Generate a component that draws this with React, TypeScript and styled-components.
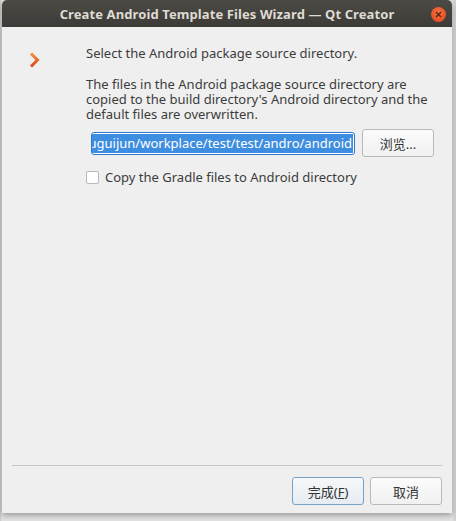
import styled, {createGlobalStyle} from 'styled-components'

const Global = createGlobalStyle`
  html, body {
    margin: 0;
    padding: 0;
    background: #d6d6d6;
  }
  body {
    width: 456px;
    height: 521px;
    overflow: hidden;
    font-family: "Noto Sans", "Noto Sans CJK SC", sans-serif;
  }
`

const Screen = styled.div`
  display: flex;
  width: 456px;
  height: 521px;
  padding-left: 2px;
  box-sizing: border-box;
  background: linear-gradient(to right, #c9c9c9 0, #e2e2e2 2px, #e2e2e2 452px, #cfcfcf 100%);
`

const Window = styled.div`
  display: flex;
  flex-direction: column;
  width: 450px;
  height: 513px;
  border-radius: 5px 5px 0 0;
  overflow: hidden;
  box-shadow: 0 2px 6px rgba(0, 0, 0, 0.35);
`

const TitleBar = styled.div`
  position: relative;
  display: flex;
  align-items: center;
  justify-content: center;
  height: 27px;
  flex: none;
  background: linear-gradient(#4b4a45, #3c3b37);
  color: #dfdbd2;
  font-weight: bold;
  font-size: 13px;
  letter-spacing: 0.1px;
`

const CloseButton = styled.div`
  position: absolute;
  right: 6px;
  top: 7px;
  width: 15px;
  height: 15px;
  border-radius: 50%;
  background: radial-gradient(circle at 50% 35%, #f4703f, #e0461b);
  display: flex;
  align-items: center;
  justify-content: center;
`

const Body = styled.div`
  flex: 1;
  display: flex;
  flex-direction: column;
  background: #efefef;
  color: #3c3c3c;
  font-size: 13px;
`

const Content = styled.div`
  display: flex;
  padding: 19px 0 0 27px;
`

const IconColumn = styled.div`
  width: 57px;
  padding-top: 6px;
  flex: none;
`

const Main = styled.div`
  display: flex;
  flex-direction: column;
  flex: 1;
`

const Line = styled.p<{$gap?: number}>`
  margin: 0;
  margin-top: ${p => p.$gap ?? 0}px;
  line-height: 15px;
`

const PathRow = styled.div`
  display: flex;
  align-items: center;
  gap: 7px;
  margin: 7px 0 0 5px;
`

const PathField = styled.div`
  width: 264px;
  height: 23px;
  box-sizing: border-box;
  border: 1px solid #2d78cc;
  border-radius: 3px;
  background: #fff;
  display: flex;
  justify-content: flex-end;
  align-items: center;
  overflow: hidden;
  white-space: nowrap;
  padding: 1px;
`

const Selection = styled.span`
  background: #3d8ee0;
  color: #fff;
  line-height: 19px;
  padding-right: 1px;
`

const Button = styled.button<{$default?: boolean}>`
  width: 72px;
  height: 28px;
  border: 1px solid ${p => (p.$default ? '#7ba2c6' : '#b9b9b9')};
  border-radius: 3px;
  background: ${p => (p.$default ? 'linear-gradient(#f6f8fa, #e6ecf1)' : 'linear-gradient(#fbfbfb, #f1f1f1)')};
  color: #333;
  font-family: "Noto Sans", "Noto Sans CJK SC", sans-serif;
  font-size: 13px;
  padding: 0;
`

const CheckRow = styled.label`
  display: flex;
  align-items: center;
  gap: 6px;
  margin-top: 12px;
  line-height: 17px;
`

const CheckBox = styled.span`
  width: 11px;
  height: 11px;
  border: 1px solid #b8b8b8;
  border-radius: 2px;
  background: #fff;
`

const Spacer = styled.div`
  flex: 1;
`

const Separator = styled.div`
  height: 1px;
  margin: 0 10px 0 10px;
  background: #c6c6c6;
`

const ButtonRow = styled.div`
  display: flex;
  justify-content: flex-end;
  gap: 6px;
  padding: 11px 10px 8px 0;
`

const Chevron = () => (
  <svg width="11" height="16" viewBox="0 0 11 16">
    <defs>
      <linearGradient id="chev" x1="0" y1="0" x2="0" y2="1">
        <stop offset="0" stopColor="#f39040" />
        <stop offset="1" stopColor="#d9461c" />
      </linearGradient>
    </defs>
    <path d="M2 1.5 L8.5 8 L2 14.5" fill="none" stroke="url(#chev)" strokeWidth="3" strokeLinejoin="miter" />
  </svg>
)

export default function App() {
  return (
    <Screen>
      <Global />
      <Window>
        <TitleBar>
          Create Android Template Files Wizard — Qt Creator
          <CloseButton>
            <svg width="7" height="7" viewBox="0 0 7 7">
              <path d="M1 1 L6 6 M6 1 L1 6" stroke="#5a2412" strokeWidth="1.4" />
            </svg>
          </CloseButton>
        </TitleBar>
        <Body>
          <Content>
            <IconColumn>
              <Chevron />
            </IconColumn>
            <Main>
              <Line>Select the Android package source directory.</Line>
              <Line $gap={16}>The files in the Android package source directory are</Line>
              <Line>copied to the build directory's Android directory and the</Line>
              <Line>default files are overwritten.</Line>
              <PathRow>
                <PathField>
                  <Selection>/home/qiuguijun/workplace/test/test/andro/android</Selection>
                </PathField>
                <Button>浏览...</Button>
              </PathRow>
              <CheckRow>
                <CheckBox />
                Copy the Gradle files to Android directory
              </CheckRow>
            </Main>
          </Content>
          <Spacer />
          <Separator />
          <ButtonRow>
            <Button $default>完成(<u>F</u>)</Button>
            <Button>取消</Button>
          </ButtonRow>
        </Body>
      </Window>
    </Screen>
  )
}
